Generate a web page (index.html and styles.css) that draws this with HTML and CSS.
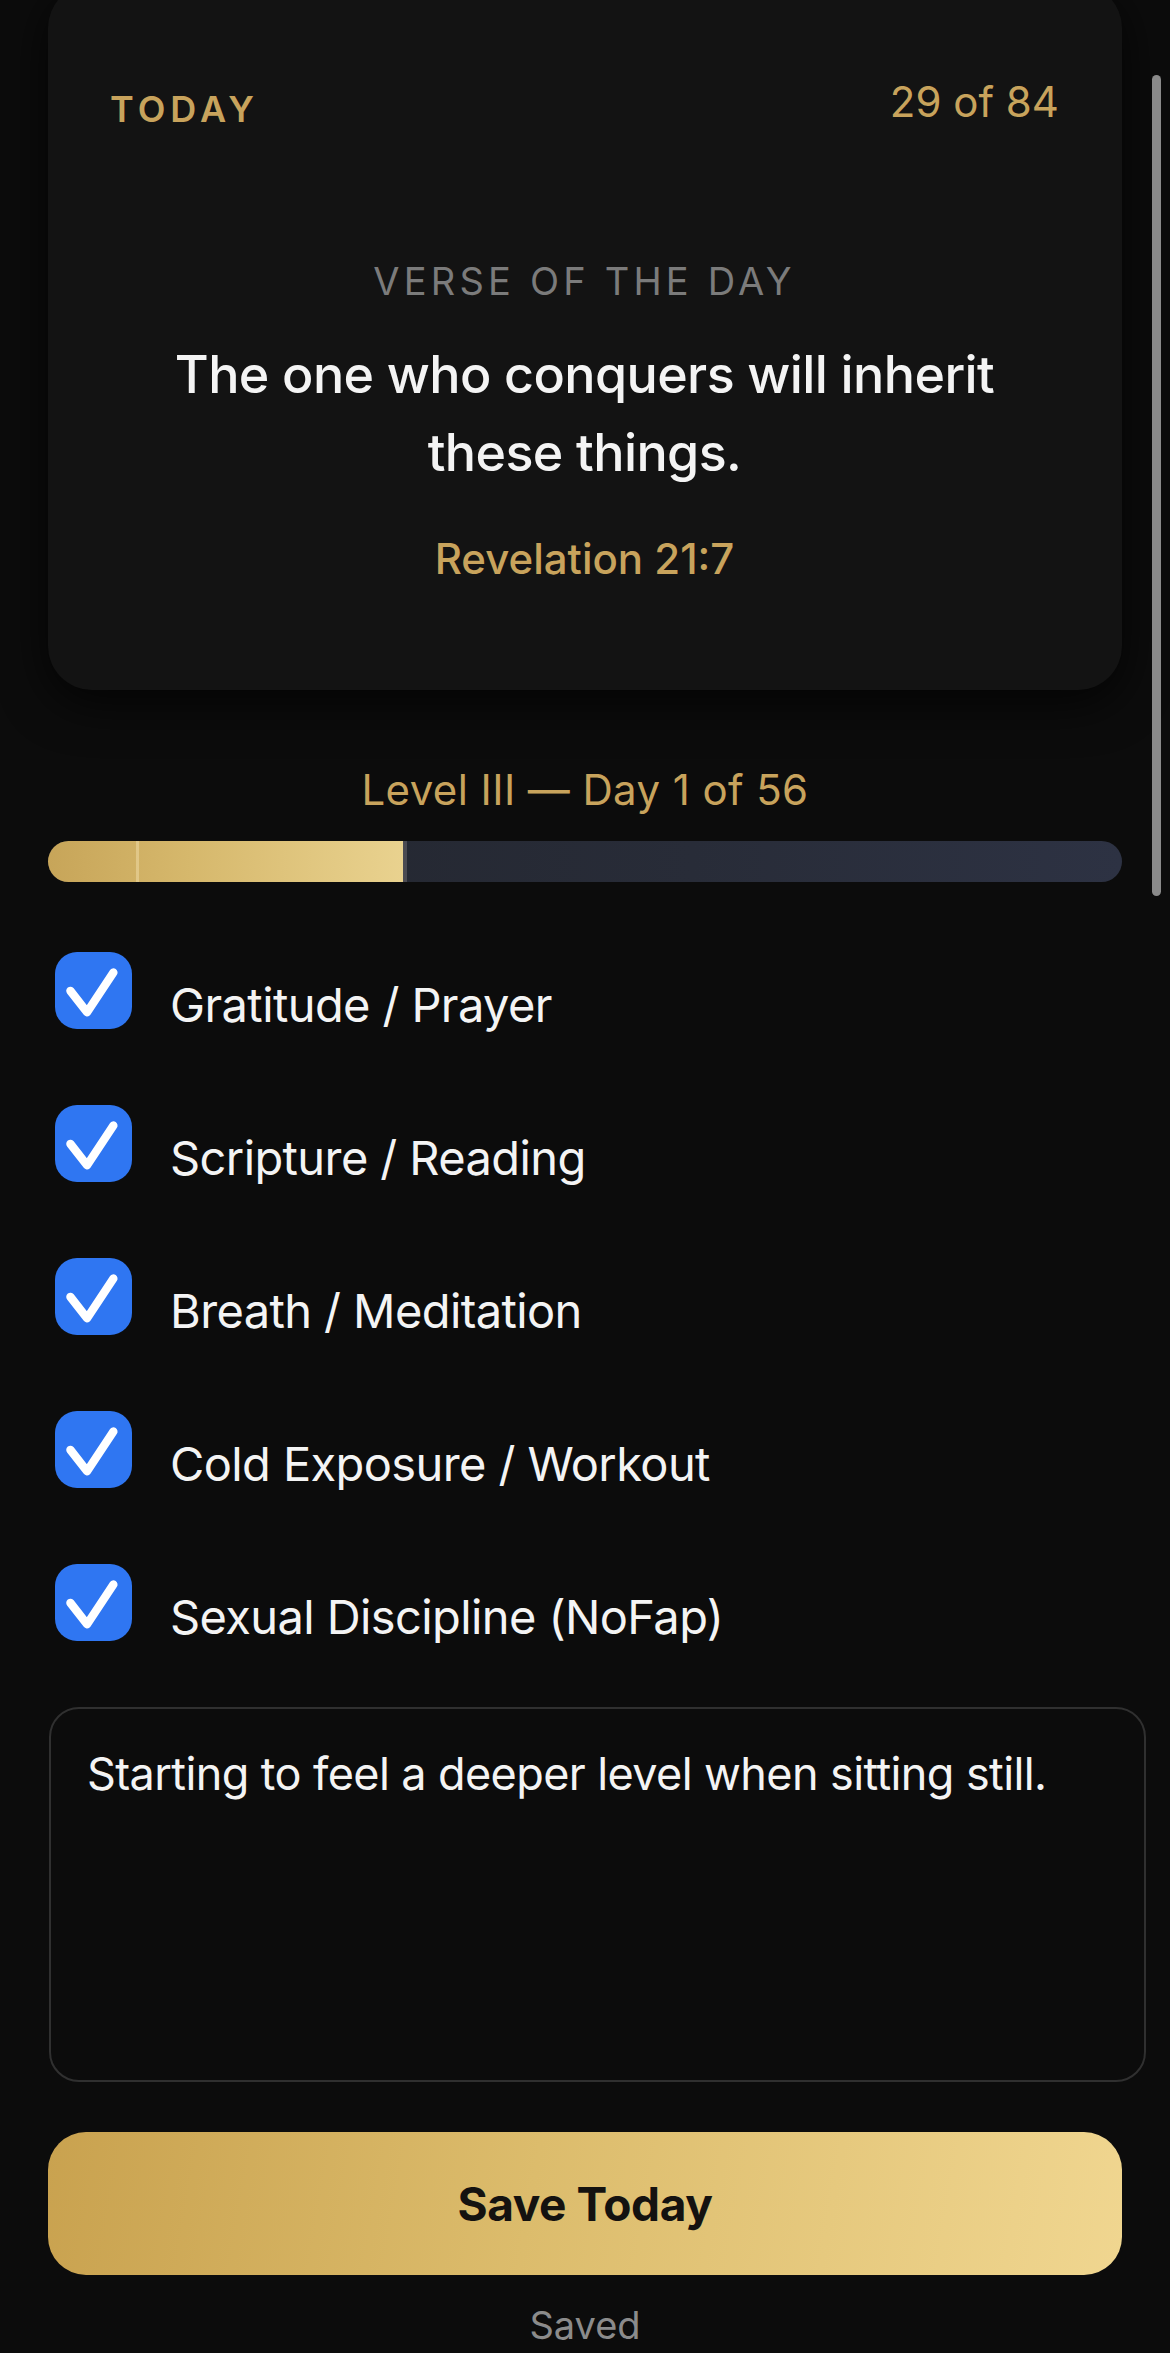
FILE: index.html
```html
<!DOCTYPE html>
<html lang="en">
<head>
<meta charset="utf-8">
<title>Today</title>
<link rel="stylesheet" href="styles.css">
</head>
<body>
<div class="screen">
  <section class="card">
    <div class="card-head">
      <span class="today">TODAY</span>
      <span class="count">29 of 84</span>
    </div>
    <div class="verse-label">VERSE OF THE DAY</div>
    <p class="verse">The one who conquers will inherit these things.</p>
    <div class="ref">Revelation 21:7</div>
  </section>

  <div class="level">Level III — Day 1 of 56</div>
  <div class="progress">
    <div class="progress-fill" style="width: 33.4%"></div>
  </div>

  <ul class="checklist">
    <li class="item"><span class="box"><svg viewBox="0 0 24 24"><path d="M4.8 12.1 L10 18.8 L18.2 6.4"/></svg></span><span class="label">Gratitude / Prayer</span></li>
    <li class="item"><span class="box"><svg viewBox="0 0 24 24"><path d="M4.8 12.1 L10 18.8 L18.2 6.4"/></svg></span><span class="label">Scripture / Reading</span></li>
    <li class="item"><span class="box"><svg viewBox="0 0 24 24"><path d="M4.8 12.1 L10 18.8 L18.2 6.4"/></svg></span><span class="label">Breath / Meditation</span></li>
    <li class="item"><span class="box"><svg viewBox="0 0 24 24"><path d="M4.8 12.1 L10 18.8 L18.2 6.4"/></svg></span><span class="label">Cold Exposure / Workout</span></li>
    <li class="item"><span class="box"><svg viewBox="0 0 24 24"><path d="M4.8 12.1 L10 18.8 L18.2 6.4"/></svg></span><span class="label">Sexual Discipline (NoFap)</span></li>
  </ul>

  <textarea class="notes">Starting to feel a deeper level when sitting still.</textarea>

  <button class="save">Save Today</button>
  <div class="status">Saved</div>

  <div class="scrollbar"></div>
</div>
</body>
</html>
```

FILE: styles.css
```css
html, body {
  margin: 0;
  padding: 0;
  background: #0c0c0c;
}

body {
  font-family: Inter, "Noto Sans", "Liberation Sans", sans-serif;
  color: #f2f2f2;
}

.screen {
  padding: 0 48px;
  height: 2353px;
  box-sizing: border-box;
  overflow: hidden;
}

.card {
  margin-top: -16px;
  background: #131313;
  border-radius: 44px;
  padding: 94px 63px 106px 62px;
  box-shadow: 0 12px 48px rgba(0, 0, 0, 0.75);
}

.card-head {
  display: flex;
  justify-content: space-between;
  align-items: flex-start;
}

.today {
  margin-top: 10px;
  font-size: 36px;
  line-height: 43px;
  letter-spacing: 5px;
  font-weight: 600;
  color: #c8a35c;
}

.count {
  font-size: 42px;
  line-height: 48px;
  font-weight: 400;
  color: #c8a35c;
}

.verse-label {
  margin-top: 127px;
  text-align: center;
  font-size: 38px;
  line-height: 46px;
  letter-spacing: 4.2px;
  color: #7b7b7b;
}

.verse {
  margin: 32px 0 0;
  text-align: center;
  font-size: 52px;
  line-height: 78px;
  font-weight: 500;
  letter-spacing: -0.6px;
  color: #f4f4f4;
  padding: 0 50px;
}

.ref {
  margin-top: 42px;
  text-align: center;
  font-size: 42px;
  line-height: 50px;
  font-weight: 500;
  color: #c8a35c;
}

.level {
  margin-top: 76px;
  text-align: center;
  font-size: 42px;
  line-height: 48px;
  letter-spacing: 0.4px;
  color: #c8a35c;
}

.progress {
  margin-top: 27px;
  height: 41px;
  border-radius: 21px;
  background: linear-gradient(90deg, #22252d 0%, #282c38 60%, #2d3243 100%);
  overflow: hidden;
  display: flex;
}

.progress-fill {
  height: 100%;
  background:
    linear-gradient(90deg, transparent 0, transparent 88px, rgba(255, 240, 200, 0.35) 88px, rgba(255, 240, 200, 0.35) 91px, transparent 91px),
    linear-gradient(90deg, #c7a559 0%, #d6b86c 40%, #e9d28f 100%);
  border-right: 4px solid #4b4b52;
  box-sizing: border-box;
}

.checklist {
  list-style: none;
  margin: 32px 0 0;
  padding: 0;
}

.item {
  height: 153px;
  display: flex;
  align-items: center;
  gap: 38px;
  padding-left: 7px;
}

.box {
  width: 77px;
  height: 77px;
  flex: none;
  border-radius: 22px;
  background: #2f76f2;
  display: flex;
  align-items: center;
  justify-content: center;
}

.box svg {
  width: 77px;
  height: 77px;
  fill: none;
  stroke: #ffffff;
  stroke-width: 2.6;
  stroke-linecap: round;
  stroke-linejoin: round;
}

.label {
  margin-top: 28px;
  font-size: 47px;
  line-height: 56px;
  letter-spacing: -0.6px;
  color: #f4f4f4;
}

.notes {
  display: block;
  margin: 28px 0 0 1px;
  width: calc(100% + 23px);
  height: 375px;
  box-sizing: border-box;
  border: 2px solid #303030;
  border-radius: 30px;
  background: transparent;
  color: #f4f4f4;
  font-family: inherit;
  font-size: 45px;
  line-height: 56px;
  letter-spacing: -0.6px;
  padding: 37px 36px;
  resize: none;
  outline: none;
}

.save {
  display: block;
  margin-top: 50px;
  width: 100%;
  height: 143px;
  border: none;
  border-radius: 38px;
  background: linear-gradient(100deg, #c9a24f 0%, #dcbc6c 45%, #f0d690 100%);
  color: #141210;
  font-family: inherit;
  font-size: 46px;
  font-weight: 700;
  letter-spacing: -0.4px;
}

.status {
  margin-top: 27px;
  text-align: center;
  font-size: 38px;
  line-height: 46px;
  color: #8b8b8b;
}

.scrollbar {
  position: absolute;
  top: 75px;
  left: 1152px;
  width: 9px;
  height: 821px;
  border-radius: 5px;
  background: #8a8a8a;
}
```
